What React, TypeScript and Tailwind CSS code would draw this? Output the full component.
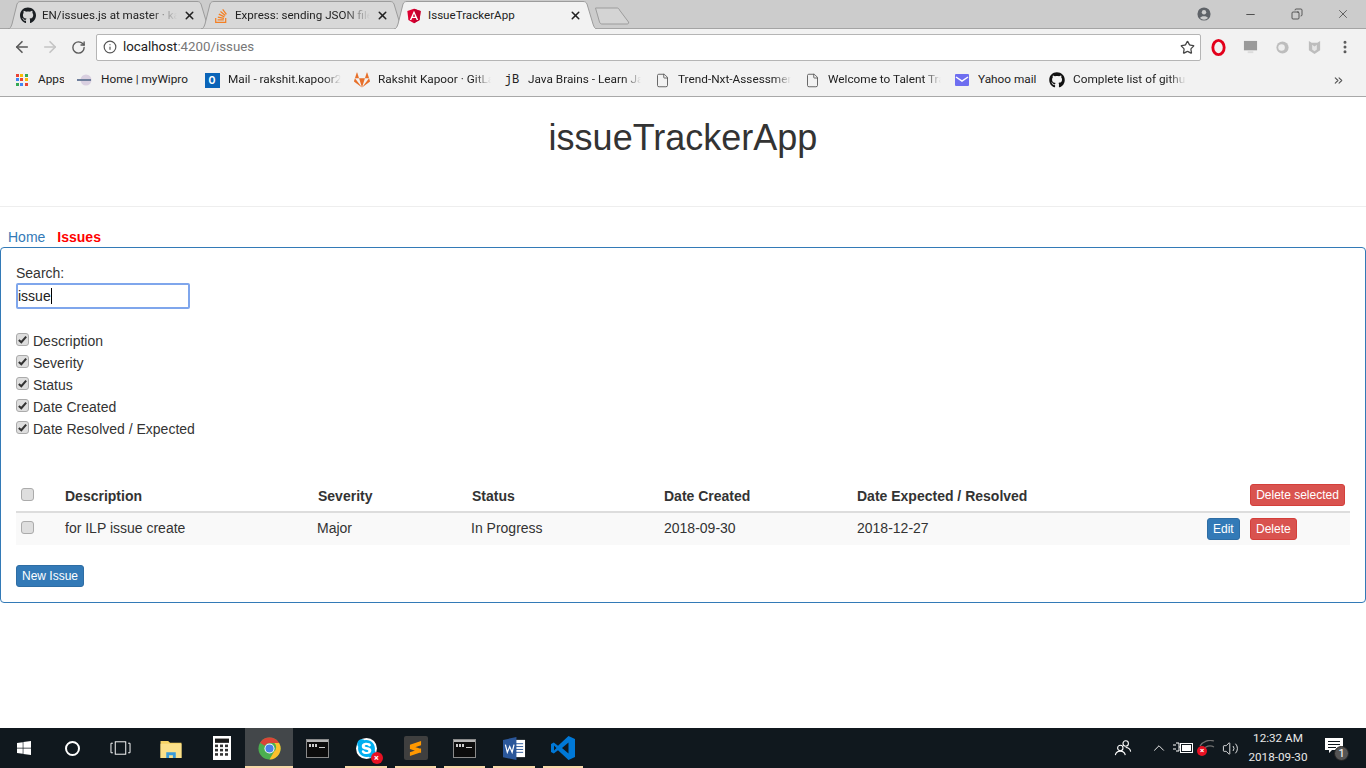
import React from 'react';
import { ArrowLeft, ArrowRight, RotateCw, Info, Star, X, Minus, Copy, MoreVertical, ChevronUp, Volume2, ChevronsRight, File } from 'lucide-react';
import { FaGithub, FaStackOverflow, FaGitlab, FaWindows, FaSkype } from 'react-icons/fa';

const chromeFont = "[font-family:'Roboto','Noto_Sans',sans-serif]";

const AngularIcon = () => (
  <svg viewBox="0 0 24 24" className="w-4 h-4">
    <path d="M12 1 2 4.600l1.600 13.500L12 23l8.400-4.900L22 4.600z" fill="#dd0031" />
    <path d="M12 1v22l8.400-4.900L22 4.600z" fill="#c3002f" />
    <path d="M12 4 5.700 18h2.300l1.300-3.100h5.400L16 18h2.300zm1.800 9h-3.600L12 8.700z" fill="#fff" />
  </svg>
);

const ChromeLogo = () => (
  <svg viewBox="0 0 48 48" className="w-[23px] h-[23px]">
    <circle cx="24" cy="24" r="23" fill="#4caf50" />
    <path d="M24 1a23 23 0 0 1 20 11.500H24a11.500 11.500 0 0 0-10 5.800L4.300 12A23 23 0 0 1 24 1z" fill="#db4437" />
    <path d="M44 12.500A23 23 0 0 1 24 47l10-17.200a11.500 11.500 0 0 0 0-17.300z" fill="#fbc02d" />
    <circle cx="24" cy="24" r="10.500" fill="#fff" />
    <circle cx="24" cy="24" r="8.500" fill="#4a80e8" />
  </svg>
);

const CmdIcon = () => (
  <svg viewBox="0 0 23 19" className="w-[23px] h-[19px]">
    <rect x="0.500" y="0.500" width="22" height="18" fill="#0c0c0c" stroke="#8a8a8a" />
    <rect x="1" y="1" width="21" height="2" fill="#b5b5b5" />
    <rect x="3" y="5" width="2" height="3" fill="#ccc" />
    <rect x="6" y="5" width="2" height="3" fill="#ccc" />
    <rect x="9" y="5" width="2" height="3" fill="#ccc" />
    <rect x="13" y="8" width="6" height="1" fill="#ccc" />
  </svg>
);

const TabShape = ({ active }: { active?: boolean }) => (
  <svg viewBox="0 0 205 29" preserveAspectRatio="none" className="absolute inset-0 w-full h-[29px]">
    <path
      d={`M1 29 C3 29 4 27 5 24 L10 4 C11 2 12 1.500 14 1.500 L190 1.500 C192 1.500 193 2 194 4 L200 24 C201 27 202 29 204 29 ${active ? '' : 'Z'}`}
      fill={active ? '#f2f2f2' : '#d8d8d8'}
      stroke="#9c9c9c"
    />
  </svg>
);

const Tab = ({ icon, title, active }: { icon: React.ReactNode; title: string; active?: boolean }) => (
  <div className="relative w-[205px] h-[29px] shrink-0 -ml-[12px] first:ml-0 -mb-px">
    <TabShape active={active} />
    <div className="relative h-full flex items-center pt-[2px] pl-[13px] pr-[16px]">
      <span className="w-4 flex justify-center shrink-0">{icon}</span>
      <span className={`ml-[6px] w-[135px] text-[11.600px] text-[#222] whitespace-nowrap overflow-hidden ${active ? '' : '[mask-image:linear-gradient(to_right,black_80%,transparent)]'}`}>
        {title}
      </span>
      <X size={13} strokeWidth={2.800} className="ml-auto text-[#222] shrink-0" />
    </div>
  </div>
);

const Bookmark = ({ icon, label, widthClass }: { icon: React.ReactNode; label: string; widthClass: string }) => (
  <div className="flex items-center shrink-0 mr-[13px]">
    <span className="w-4 h-4 flex items-center justify-center shrink-0">{icon}</span>
    <span className={`ml-2 text-[11.800px] text-[#222] whitespace-nowrap overflow-hidden ${widthClass}`}>{label}</span>
  </div>
);

const AppsIcon = () => {
  const colors = ['#ea4335', '#fbbc05', '#34a853', '#4285f4', '#ea4335', '#fbbc05', '#34a853', '#4285f4', '#ea4335'];
  return (
    <span className="grid grid-cols-3 gap-[1px] w-[13px] h-[13px]">
      {colors.map((c, i) => (
        <span key={i} className="w-[3px] h-[3px]" style={{ backgroundColor: c }} />
      ))}
    </span>
  );
};

const fade = '[mask-image:linear-gradient(to_right,black_85%,transparent)]';

const CheckBox = ({ checked }: { checked?: boolean }) => (
  <span className="inline-flex w-[13px] h-[13px] bg-[#dedede] border border-[#ababab] rounded-[3px] items-center justify-center shrink-0">
    {checked && (
      <svg viewBox="0 0 12 12" className="w-[11px] h-[11px]">
        <path d="M2 6.500 4.700 9 10 2.800" fill="none" stroke="#333" strokeWidth="2.200" />
      </svg>
    )}
  </span>
);

const Btn = ({ color, children, className }: { color: 'red' | 'blue'; children: React.ReactNode; className?: string }) => (
  <button
    className={`block h-[22px] px-[5px] text-[12px] font-normal leading-[18px] text-white border rounded-[3px] ${
      color === 'red' ? 'bg-[#d9534f] border-[#d43f3a]' : 'bg-[#337ab7] border-[#2e6da4]'
    } ${className ?? ''}`}
  >
    {children}
  </button>
);

const TaskItem = ({ widthClass, active, open, children }: { widthClass: string; active?: boolean; open?: boolean; children: React.ReactNode }) => (
  <div className={`relative h-10 flex items-center justify-center shrink-0 ${widthClass} ${active ? 'bg-[#43474a]' : ''}`}>
    {children}
    {open && <span className={`absolute bottom-0 h-[2px] bg-[#f6d8a8] ${active ? 'inset-x-0' : 'inset-x-1'}`} />}
  </div>
);

const filters = ['Description', 'Severity', 'Status', 'Date Created', 'Date Resolved / Expected'];

const App: React.FC = () => {
  return (
    <div className="w-[1366px] h-[768px] flex flex-col overflow-hidden bg-white text-[14px] text-[#333] [font-family:'Liberation_Sans',Arial,sans-serif]">
      {/* Chrome: tab strip */}
      <div className={`h-[29px] bg-[#cccccc] border-b border-[#a4a4a4] flex items-end pl-[7px] relative shrink-0 ${chromeFont}`}>
        <Tab icon={<FaGithub size={17} className="text-[#1b1f23]" />} title="EN/issues.js at master · kapoor" />
        <Tab icon={<FaStackOverflow size={16} className="text-[#f48024]" />} title="Express: sending JSON file to" />
        <Tab icon={<AngularIcon />} title="IssueTrackerApp" active />
        <svg viewBox="0 0 36 18" className="w-9 h-[18px] -ml-[4px] mb-[3px] shrink-0">
          <path d="M1.500 1 H23 C24 1 25 1.500 25.500 3 L34.500 15 C35 16.500 34 17 33 17 H8 C7 17 6 16.500 5.500 15 Z" fill="#d4d4d4" stroke="#9c9c9c" />
        </svg>
        <div className="ml-auto flex items-center h-[28px] self-start text-[#333]">
          <svg viewBox="0 0 16 16" className="w-[14px] h-[14px] mr-[33px] -mt-[1px]">
            <circle cx="8" cy="8" r="7.500" fill="#5f6368" />
            <circle cx="8" cy="6" r="2.500" fill="#ccc" />
            <path d="M3.500 12.500c1-2.500 8-2.500 9 0a6 6 0 0 1-9 0z" fill="#ccc" />
          </svg>
          <Minus size={13} strokeWidth={1.500} className="mr-[34px]" />
          <Copy size={12} strokeWidth={1.500} className="mr-[33px] -scale-x-100" />
          <X size={14} strokeWidth={1.200} className="mr-[16px]" />
        </div>
      </div>

      {/* Chrome: toolbar */}
      <div className={`h-[35px] pt-px bg-[#f2f2f2] flex items-center shrink-0 ${chromeFont}`}>
        <ArrowLeft size={18} strokeWidth={2.200} className="ml-[13px] text-[#5a5a5a]" />
        <ArrowRight size={18} strokeWidth={2.200} className="ml-[10px] text-[#c4c4c4]" />
        <RotateCw size={15} strokeWidth={2.200} className="ml-[12px] text-[#5a5a5a]" />
        <div className="ml-[10px] w-[1105px] h-[27px] bg-white border border-[#b5b5b5] rounded-[2px] flex items-center pl-[6px] pr-[5px]">
          <Info size={14} strokeWidth={2} className="text-[#555]" />
          <span className="ml-[6px] text-[13.300px] text-[#222]">
            localhost<span className="text-[#777]">:4200/issues</span>
          </span>
          <Star size={15} strokeWidth={2} className="ml-auto text-[#444]" />
        </div>
        <svg viewBox="0 0 18 18" className="ml-[9px] w-[17px] h-[17px]">
          <ellipse cx="9" cy="9" rx="6" ry="7.500" fill="none" stroke="#e3001b" strokeWidth="3" />
        </svg>
        <svg viewBox="0 0 16 16" className="ml-[16px] w-[15px] h-[15px]">
          <rect x="1" y="1" width="14" height="10" fill="#9a9a9a" />
          <rect x="5" y="12" width="6" height="2" fill="#dcdcdc" />
        </svg>
        <svg viewBox="0 0 16 16" className="ml-[17px] w-[15px] h-[15px]">
          <circle cx="8" cy="8" r="6.500" fill="#bdbdbd" />
          <circle cx="7" cy="8" r="3.500" fill="#eee" />
        </svg>
        <svg viewBox="0 0 16 16" className="ml-[17px] w-[15px] h-[15px]">
          <path d="M2 1 L5 3 H11 L14 1 V11 L8 15 L2 11 Z" fill="#bdbdbd" />
          <path d="M5.500 5 L8 7 L10.500 5 V10 L8 12 L5.500 10 Z" fill="#e6e6e6" />
        </svg>
        <MoreVertical size={16} strokeWidth={2.500} className="ml-[15px] text-[#5a5a5a]" />
      </div>

      {/* Chrome: bookmarks */}
      <div className={`h-[33px] bg-[#f2f2f2] border-b border-[#a8a8a8] flex items-center pl-[14px] shrink-0 ${chromeFont}`}>
        <Bookmark icon={<AppsIcon />} label="Apps" widthClass="w-[26px]" />
        <Bookmark
          icon={
            <svg viewBox="0 0 16 16" className="w-4 h-4">
              <circle cx="9" cy="8" r="5.500" fill="#d9cfe0" />
              <rect x="0" y="7" width="14" height="2" fill="#6f7f9c" />
            </svg>
          }
          label="Home | myWipro"
          widthClass="w-[90px]"
        />
        <Bookmark
          icon={
            <span className="w-[15px] h-[15px] bg-[#0a64b8] text-white text-[10px] font-bold leading-[15px] text-center">O</span>
          }
          label="Mail - rakshit.kapoor2@wipro.com"
          widthClass={`w-[113px] ${fade}`}
        />
        <Bookmark icon={<FaGitlab size={16} className="text-[#e8702a]" />} label="Rakshit Kapoor · GitLab" widthClass={`w-[113px] ${fade}`} />
        <Bookmark
          icon={<span className="text-[12px] [font-family:'Liberation_Mono',monospace] text-[#222]">jB</span>}
          label="Java Brains - Learn Java"
          widthClass={`w-[113px] ${fade}`}
        />
        <Bookmark icon={<File size={15} strokeWidth={1.400} className="text-[#555]" />} label="Trend-Nxt-Assessment" widthClass={`w-[113px] ${fade}`} />
        <Bookmark icon={<File size={15} strokeWidth={1.400} className="text-[#555]" />} label="Welcome to Talent Transformation" widthClass={`w-[113px] ${fade}`} />
        <Bookmark
          icon={
            <svg viewBox="0 0 16 16" className="w-4 h-4">
              <rect x="1" y="2" width="14" height="12" rx="1" fill="#6e6ef0" />
              <path d="M2 5 L8 9 L14 5" fill="none" stroke="#fff" strokeWidth="1.500" />
            </svg>
          }
          label="Yahoo mail"
          widthClass="w-[58px]"
        />
        <Bookmark icon={<FaGithub size={16} className="text-[#111]" />} label="Complete list of github" widthClass={`w-[113px] ${fade}`} />
        <ChevronsRight size={13} strokeWidth={2} className="ml-[133px] text-[#555]" />
      </div>

      {/* Page */}
      <div className="flex-1 min-h-0">
        <div className="h-[110px] border-b border-[#eeeeee] pt-[21px]">
          <h1 className="text-[36px] leading-[40px] text-center text-[#333] font-normal">issueTrackerApp</h1>
        </div>
        <nav className="pt-5 pl-2 h-10 flex gap-3 leading-5">
          <a className="text-[#337ab7]">Home</a>
          <a className="text-[#ff0000] font-bold">Issues</a>
        </nav>

        <div className="border border-[#337ab7] rounded-[4px] px-[15px] pt-[15px] pb-[15px] h-[356px]">
          <label className="block leading-5">Search:</label>
          <div className="w-[174px] h-[26px] border-2 border-[#7fa6ec] rounded-[2px] flex items-center text-[14px] text-[#222]">
            issue<span className="w-px h-4 bg-black" />
          </div>

          <div className="mt-[21px]">
            {filters.map((f) => (
              <div key={f} className="h-[22px] flex items-center gap-[4px]">
                <span className="flex -mt-1"><CheckBox checked /></span>
                <span>{f}</span>
              </div>
            ))}
          </div>

          <table className="mt-[42px] w-[1334px] table-fixed border-collapse">
            <colgroup>
              <col className="w-[41px]" />
              <col className="w-[253px]" />
              <col className="w-[154px]" />
              <col className="w-[192px]" />
              <col className="w-[193px]" />
              <col className="w-[350px]" />
              <col className="w-[51px]" />
              <col className="w-[100px]" />
            </colgroup>
            <thead>
              <tr className="h-[30px] border-b-2 border-[#dddddd] font-bold text-left">
                <th className="pl-[5px]"><CheckBox /></th>
                <th className="px-2">Description</th>
                <th className="px-2">Severity</th>
                <th className="px-2">Status</th>
                <th className="px-2">Date Created</th>
                <th className="px-2">Date Expected / Resolved</th>
                <th />
                <th className="align-top pt-[2px]"><Btn color="red" className="w-[95px] whitespace-nowrap">Delete selected</Btn></th>
              </tr>
            </thead>
            <tbody>
              <tr className="h-[33px] bg-[#f9f9f9]">
                <td className="pl-[5px]"><CheckBox /></td>
                <td className="px-2 pb-[2px]">for ILP issue create</td>
                <td className="pl-[7px] pr-2 pb-[2px]">Major</td>
                <td className="pl-[7px] pr-2 pb-[2px]">In Progress</td>
                <td className="px-2 pb-[2px]">2018-09-30</td>
                <td className="px-2 pb-[2px]">2018-12-27</td>
                <td className="pl-2"><Btn color="blue">Edit</Btn></td>
                <td><Btn color="red">Delete</Btn></td>
              </tr>
            </tbody>
          </table>

          <div className="mt-5">
            <Btn color="blue">New Issue</Btn>
          </div>
        </div>
      </div>

      {/* Windows taskbar */}
      <div className={`h-10 bg-[#10181e] flex items-center shrink-0 text-white ${chromeFont}`}>
        <TaskItem widthClass="w-12"><FaWindows size={16} /></TaskItem>
        <TaskItem widthClass="w-12">
          <span className="w-[15px] h-[15px] rounded-full border-2 border-white" />
        </TaskItem>
        <TaskItem widthClass="w-12">
          <svg viewBox="0 0 22 16" className="w-[21px] h-4">
            <path d="M3 3H1V13H3M19 3H21V13H19" fill="none" stroke="#fff" />
            <rect x="5.500" y="1.500" width="11" height="13" fill="none" stroke="#fff" />
          </svg>
        </TaskItem>
        <TaskItem widthClass="w-[54px]">
          <svg viewBox="0 0 22 20" className="w-[22px] h-[19px]">
            <path d="M0 2H8L10 4H22V20H0Z" fill="#f6d365" />
            <rect x="0" y="5" width="22" height="15" fill="#fbe08a" />
            <path d="M6 20V14H16V20H13V17H9V20Z" fill="#3a9ad9" />
          </svg>
        </TaskItem>
        <TaskItem widthClass="w-[47px]">
          <svg viewBox="0 0 18 28" preserveAspectRatio="none" className="w-[18px] h-6">
            <rect width="18" height="28" fill="#fff" />
            <rect x="2" y="3" width="14" height="5" fill="#1a1a1a" />
            {[10, 15, 20].map((y) => [2, 7, 12].map((x) => <rect key={`${x}-${y}`} x={x} y={y} width="3" height="3" fill="#333" />))}
          </svg>
        </TaskItem>
        <TaskItem widthClass="w-[48px]" active open><ChromeLogo /></TaskItem>
        <TaskItem widthClass="w-[48px]"><CmdIcon /></TaskItem>
        <TaskItem widthClass="w-[50px]" open>
          <span className="relative flex">
            <span className="bg-white rounded-full">
              <FaSkype size={21} className="text-[#00aff0]" />
            </span>
            <span className="absolute -right-[6px] -bottom-[5px] w-3 h-3 rounded-full bg-[#e81123] text-white text-[9px] font-bold leading-3 text-center">×</span>
          </span>
        </TaskItem>
        <TaskItem widthClass="w-[49px]" open>
          <span className="w-[24px] h-[24px] rounded-[2px] bg-[#3f3f3f] flex items-center justify-center">
            <svg viewBox="0 0 14 18" className="w-[13px] h-[17px]">
              <path d="M1 5 13 1V5.500L1 9.500ZM1 5.500 13 9.500V13.500L1 9.500ZM1 13 13 9V13L1 17Z" fill="#ff9800" />
            </svg>
          </span>
        </TaskItem>
        <TaskItem widthClass="w-[49px]" open><CmdIcon /></TaskItem>
        <TaskItem widthClass="w-[50px]" open>
          <svg viewBox="0 0 24 24" className="w-[23px] h-[23px]">
            <rect x="9" y="3" width="14" height="18" fill="#fff" />
            <path d="M12 7h9M12 10h9M12 13h9M12 16h9" stroke="#2b579a" />
            <path d="M0 3 L14 0 V24 L0 21 Z" fill="#2b579a" />
            <path d="M2.500 8 L4.500 16 L7 10 L9.500 16 L11.500 8" fill="none" stroke="#fff" strokeWidth="1.300" />
          </svg>
        </TaskItem>
        <TaskItem widthClass="w-[48px]" open>
          <svg viewBox="0 0 24 24" className="w-[24px] h-[24px]">
            <path d="M17.500 0 24 3v18l-6.500 3L7 14.200 2.800 17.500 0 16V8l2.800-1.500L7 9.800zM17.500 6.500 11 12l6.500 5.500zM3 9.500v5L5.500 12z" fill="#0078d7" />
          </svg>
        </TaskItem>

        <div className="ml-auto flex items-center h-10 shrink-0">
          <svg viewBox="0 0 20 20" className="w-[18px] h-[18px] mr-[18px]">
            <circle cx="7" cy="10" r="3" fill="none" stroke="#fff" strokeWidth="1.200" />
            <path d="M1.500 18c.5-3 2.500-4.500 5.500-4.500S12 15 12.500 18" fill="none" stroke="#fff" strokeWidth="1.200" />
            <circle cx="13" cy="5" r="3" fill="none" stroke="#fff" strokeWidth="1.200" />
            <path d="M13 9.500c3 0 5 1.500 5.500 4.500" fill="none" stroke="#fff" strokeWidth="1.200" />
          </svg>
          <ChevronUp size={18} strokeWidth={1.200} className="mr-[5px]" />
          <svg viewBox="0 0 20 12" className="w-5 h-3 mr-[4px]">
            <path d="M0 3H3M0 7H3M3 1H6V9H3M6 5H7" fill="none" stroke="#fff" />
            <rect x="7.500" y="1.500" width="12" height="9" fill="none" stroke="#fff" />
            <rect x="9" y="3" width="9" height="6" fill="#fff" />
          </svg>
          <span className="relative w-[20px] h-[16px] mr-[5px]">
            <svg viewBox="0 0 20 16" className="absolute inset-0 w-5 h-4">
              <path d="M6 10a8 8 0 0 1 11-3M3 6a12 12 0 0 1 14-5" fill="none" stroke="#6f6f6f" strokeWidth="1.200" />
            </svg>
            <span className="absolute left-0 bottom-0 w-[10px] h-[10px] rounded-full bg-[#e81123] text-white text-[8px] font-bold leading-[10px] text-center">×</span>
          </span>
          <Volume2 size={17} strokeWidth={1.200} className="mr-[4px]" />
          <div className="w-[70px] -mt-[1px] text-center text-[11.700px] leading-[19px] text-[#e8e8e8]">
            <div>12:32 AM</div>
            <div>2018-09-30</div>
          </div>
          <span className="relative ml-[12px] mr-[23px] w-[18px] h-[20px] flex">
            <svg viewBox="0 0 18 16" className="w-[18px] h-4">
              <path d="M0 0H18V12H7L4 15V12H0Z" fill="#fff" />
              <path d="M3 3.500H15M3 6.500H15M3 9.500H11" stroke="#10181e" />
            </svg>
            <span className="absolute -right-[6px] -bottom-[3px] w-[15px] h-[15px] rounded-full bg-[#555] border border-[#222] text-white text-[11px] leading-[13px] text-center">1</span>
          </span>
        </div>
      </div>
    </div>
  );
};

export default App;
